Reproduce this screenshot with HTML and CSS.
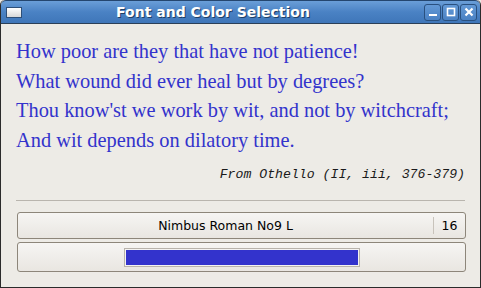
FILE: index.html
```html
<!DOCTYPE html>
<html>
<head>
  <title>Font and Color Selection</title>
  <meta charset="utf-8">
  <link rel="stylesheet" href="styles.css">
</head>
<body>
  <div class="window">
    <div class="titlebar">
      <div class="menu-icon"></div>
      <span class="title">Font and Color Selection</span>
      <div class="controls">
        <div class="ctl">
          <svg viewBox="0 0 10 10"><rect x="1" y="7" width="8" height="2" fill="#fff"/></svg>
        </div>
        <div class="ctl">
          <svg viewBox="0 0 10 10"><rect x="1.5" y="1.5" width="7" height="7" fill="none" stroke="#fff" stroke-width="1.6"/></svg>
        </div>
        <div class="ctl">
          <svg viewBox="0 0 10 10"><path d="M1.5 1.5 L8.5 8.5 M8.5 1.5 L1.5 8.5" stroke="#fff" stroke-width="2.2"/></svg>
        </div>
      </div>
    </div>

    <div class="content">
      <div class="quote">
        <div class="line">How poor are they that have not patience!</div>
        <div class="line">What wound did ever heal but by degrees?</div>
        <div class="line">Thou know'st we work by wit, and not by witchcraft;</div>
        <div class="line">And wit depends on dilatory time.</div>
      </div>
      <div class="source">From Othello (II, iii, 376-379)</div>

      <hr class="separator">

      <button class="font-btn">
        <span class="font-name">Nimbus Roman No9 L</span>
        <span class="font-size">16</span>
      </button>
      <button class="color-btn">
        <span class="swatch"></span>
      </button>
    </div>
  </div>
</body>
</html>
```

FILE: styles.css
```css
html, body {
  margin: 0;
  padding: 0;
  background-color: #edebe6;
}

body {
  width: 481px;
  height: 288px;
  font-family: "DejaVu Sans", sans-serif;
  overflow: hidden;
}

.window {
  box-sizing: border-box;
  width: 481px;
  height: 288px;
  border: 1px solid #2b2b2b;
  border-top: none;
  border-radius: 5px 5px 0 0;
  background-color: #edebe6;
  display: flex;
  flex-direction: column;
  overflow: hidden;
}

.titlebar {
  height: 22px;
  flex-shrink: 0;
  display: flex;
  align-items: center;
  padding: 0 3px 0 5px;
  background: linear-gradient(#6a9ed8, #4a82c4 50%, #3f76b9);
  border-top: 1px solid #24466f;
  border-bottom: 1px solid #2b3f57;
  border-radius: 5px 5px 0 0;
}

.menu-icon {
  width: 14px;
  height: 9px;
  border: 1px solid #2e4f78;
  background: linear-gradient(#ffffff, #d8d8d8);
  margin-top: 1px;
}

.title {
  flex: 1;
  text-align: center;
  color: #ffffff;
  font-weight: bold;
  font-size: 14px;
  text-shadow: 1px 1px 0 #1f3f66;
  margin-left: -20px;
}

.controls {
  display: flex;
  gap: 1px;
}

.ctl {
  width: 15px;
  height: 15px;
  border: 1px solid #29507f;
  border-radius: 3px;
  background: linear-gradient(#6399d6, #4a81c3);
  display: flex;
  align-items: center;
  justify-content: center;
}

.ctl svg {
  width: 10px;
  height: 10px;
}

.content {
  flex: 1;
  display: flex;
  flex-direction: column;
  padding: 13px 15px 0 15px;
}

.quote {
  font-family: "Liberation Serif", serif;
  font-size: 20.4px;
  line-height: 29.5px;
  color: #3333cc;
  white-space: nowrap;
}

.source {
  font-family: "Liberation Mono", monospace;
  font-style: italic;
  font-size: 13.2px;
  color: #1a1a1a;
  text-align: right;
  margin-top: 12px;
}

.separator {
  border: none;
  border-top: 1px solid #b9b5ae;
  margin: 18px 0 11px 0;
}

.font-btn,
.color-btn {
  box-sizing: border-box;
  margin: 0 0 0 1px;
  width: 449px;
  border: 1px solid #8d867a;
  border-radius: 3px;
  background: linear-gradient(#f6f5f3, #e9e6e1);
  font-family: "DejaVu Sans", sans-serif;
  padding: 0;
}

.font-btn {
  height: 27px;
  display: flex;
  align-items: center;
  font-size: 12.5px;
  color: #000;
}

.font-name {
  flex: 1;
  text-align: center;
}

.font-size {
  width: 31px;
  height: 17px;
  line-height: 17px;
  border-left: 1px solid #c8c3bb;
  text-align: center;
}

.color-btn {
  height: 30px;
  margin-top: 3px;
  display: flex;
  align-items: center;
  justify-content: center;
}

.swatch {
  width: 232px;
  height: 15px;
  background-color: #3333cc;
  border: 1px solid #f4f3f1;
  outline: 1px solid #b8b3ab;
}
```
